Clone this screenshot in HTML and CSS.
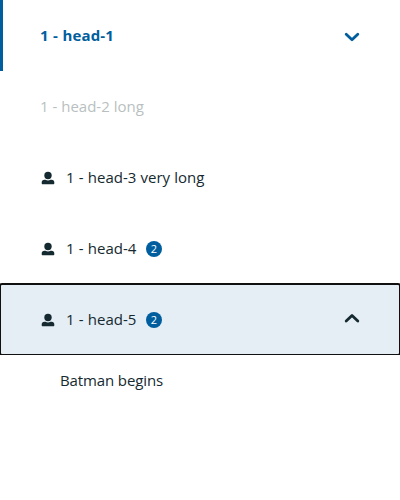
FILE: index.html
```
<!DOCTYPE html>
<html lang="en">
<head>
<meta charset="utf-8">
<title>Tabs</title>
<link rel="stylesheet" href="styles.css">
</head>
<body>
<nav class="tabs">
  <div class="tab tab--active">
    <span class="label">1 - head-1</span>
    <svg class="chevron" viewBox="0 0 16 16"><path d="M2.200 6.300l5.800 5.500 5.800-5.500"/></svg>
  </div>
  <div class="tab tab--disabled"><span class="label label--disabled">1 - head-2 long</span></div>
  <div class="tab">
    <svg class="person" viewBox="0 0 16 16"><circle cx="8" cy="5.500" r="3.700"/><path d="M1.700 13.200v-.7c0-1.600 1-2.700 2.800-2.700h1c1.500 1 3.500 1 5 0h1c1.800 0 2.800 1.100 2.800 2.700v.7c0 .6-.4 1-1 1H2.700c-.6 0-1-.4-1-1z"/></svg>
    <span class="label">1 - head-3 very long</span>
  </div>
  <div class="tab">
    <svg class="person" viewBox="0 0 16 16"><circle cx="8" cy="5.500" r="3.700"/><path d="M1.700 13.200v-.7c0-1.600 1-2.700 2.800-2.700h1c1.500 1 3.500 1 5 0h1c1.800 0 2.800 1.100 2.800 2.700v.7c0 .6-.4 1-1 1H2.700c-.6 0-1-.4-1-1z"/></svg>
    <span class="label">1 - head-4</span><span class="badge">2</span>
  </div>
  <div class="tab tab--focused">
    <svg class="person" viewBox="0 0 16 16"><circle cx="8" cy="5.500" r="3.700"/><path d="M1.700 13.200v-.7c0-1.600 1-2.700 2.800-2.700h1c1.500 1 3.500 1 5 0h1c1.800 0 2.800 1.100 2.800 2.700v.7c0 .6-.4 1-1 1H2.700c-.6 0-1-.4-1-1z"/></svg>
    <span class="label">1 - head-5</span><span class="badge">2</span>
    <svg class="chevron" viewBox="0 0 16 16"><path d="M2.200 9L8 3.500 13.800 9"/></svg>
  </div>
  <div class="subitem">Batman begins</div>
</nav>
</body>
</html>
```
FILE: styles.css
```
body {
  margin: 0;
  background: #fff;
  color: #152a30;
  font: 15px/23px "Open Sans", sans-serif;
}
.tab {
  display: flex;
  align-items: center;
  box-sizing: border-box;
  height: 71px;
  padding: 0 40px;
}
.label { word-spacing: 0.3px; }
.tab--active {
  padding-left: 37px;
  border-left: 3px solid #005e9e;
  color: #005e9e;
  font-weight: 700;
  letter-spacing: 0.15px;
}
.tab--disabled { color: #b9bfc1; }
.label--disabled { word-spacing: 0; }
.tab--focused {
  background: #e5edf5;
  outline: 2px solid #101010;
  outline-offset: -1px;
  border-radius: 2px;
}
.person {
  width: 16px;
  height: 16px;
  margin-right: 10px;
  fill: currentColor;
}
.chevron {
  width: 16px;
  height: 16px;
  margin-left: auto;
  fill: none;
  stroke: currentColor;
  stroke-width: 2.8;
  stroke-linecap: round;
  stroke-linejoin: round;
}
.badge {
  width: 16px;
  height: 16px;
  margin-left: 9.5px;
  border-radius: 50%;
  background: #005e9e;
  color: #fff;
  font-size: 11px;
  font-weight: 500;
  line-height: 16px;
  text-align: center;
}
.subitem {
  position: relative;
  padding: 14px 60px;
  background: #fff;
  letter-spacing: -0.12px;
}
```
